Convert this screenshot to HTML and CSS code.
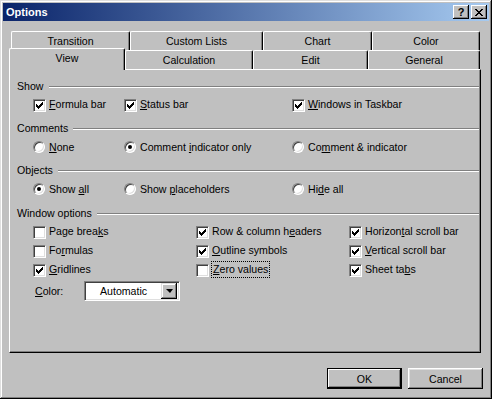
FILE: index.html
```html
<!DOCTYPE html>
<html lang="en">
<head>
    <meta charset="UTF-8">
    <title>Options</title>
    <link rel="stylesheet" href="styles.css">
</head>
<body>
    <div class="window">
        <div class="title-bar">
            <span class="title-text">Options</span>
            <div class="title-buttons">
                <button class="title-btn help-btn">?</button>
                <button class="title-btn close-btn">
                    <svg width="8" height="7" viewBox="0 0 8 7" shape-rendering="crispEdges">
                        <path d="M0 0h2v1h-2zM6 0h2v1h-2zM1 1h2v1h-2zM5 1h2v1h-2zM2 2h4v1h-4zM3 3h2v1h-2zM2 4h4v1h-4zM1 5h2v1h-2zM5 5h2v1h-2zM0 6h2v1h-2zM6 6h2v1h-2z" fill="#000"/>
                    </svg>
                </button>
            </div>
        </div>

        <!-- tab strip, two rows -->
        <div class="tab-row tab-row-top">
            <div class="tab tab-transition">Transition</div>
            <div class="tab tab-lists">Custom Lists</div>
            <div class="tab tab-chart">Chart</div>
            <div class="tab tab-color">Color</div>
        </div>
        <div class="tab-row tab-row-bottom">
            <div class="tab tab-view active">View</div>
            <div class="tab tab-calc">Calculation</div>
            <div class="tab tab-edit">Edit</div>
            <div class="tab tab-general">General</div>
        </div>

        <div class="panel">
            <div class="group-head head-show"><span>Show</span><div class="groove"></div></div>
            <div class="opt-row cols-3 row-show">
                <label class="opt"><span class="check checked"></span><span><u>F</u>ormula bar</span></label>
                <label class="opt"><span class="check checked"></span><span><u>S</u>tatus bar</span></label>
                <label class="opt"><span class="check checked"></span><span><u>W</u>indows in Taskbar</span></label>
            </div>

            <div class="group-head head-next"><span>Comments</span><div class="groove"></div></div>
            <div class="opt-row cols-3 row-radio">
                <label class="opt"><span class="radio"></span><span><u>N</u>one</span></label>
                <label class="opt"><span class="radio on"></span><span>Comment <u>i</u>ndicator only</span></label>
                <label class="opt"><span class="radio"></span><span>Co<u>m</u>ment &amp; indicator</span></label>
            </div>

            <div class="group-head head-objects"><span>Objects</span><div class="groove"></div></div>
            <div class="opt-row cols-3 row-radio">
                <label class="opt"><span class="radio on"></span><span>Show <u>a</u>ll</span></label>
                <label class="opt"><span class="radio"></span><span>Show <u>p</u>laceholders</span></label>
                <label class="opt"><span class="radio"></span><span>Hi<u>d</u>e all</span></label>
            </div>

            <div class="group-head head-next"><span>Window options</span><div class="groove"></div></div>
            <div class="window-grid">
                <label class="opt"><span class="check"></span><span>Page brea<u>k</u>s</span></label>
                <label class="opt"><span class="check checked"></span><span>Row &amp; column h<u>e</u>aders</span></label>
                <label class="opt"><span class="check checked"></span><span>Horizon<u>t</u>al scroll bar</span></label>

                <label class="opt"><span class="check"></span><span>Fo<u>r</u>mulas</span></label>
                <label class="opt"><span class="check checked"></span><span><u>O</u>utline symbols</span></label>
                <label class="opt"><span class="check checked"></span><span><u>V</u>ertical scroll bar</span></label>

                <label class="opt"><span class="check checked"></span><span><u>G</u>ridlines</span></label>
                <label class="opt"><span class="check"></span><span class="focus"><u>Z</u>ero values</span></label>
                <label class="opt"><span class="check checked"></span><span>Sheet ta<u>b</u>s</span></label>
            </div>
            <div class="color-row">
                <span class="color-label"><u>C</u>olor:</span>
                <div class="combo">
                    <span class="combo-value">Automatic</span>
                    <span class="combo-btn"><span class="arrow"></span></span>
                </div>
            </div>
        </div>

        <div class="dialog-buttons">
            <button class="btn default">OK</button>
            <button class="btn">Cancel</button>
        </div>
    </div>
</body>
</html>
```

FILE: styles.css
```css
:root {
    --face: #c0c0c0;
    --shadow: #808080;
    --dark: #000000;
    --light: #dfdfdf;
    --hilite: #ffffff;
}

body {
    margin: 0;
    background: var(--face);
    font-family: 'Liberation Sans', Arial, sans-serif;
    font-size: 10.6px;
    color: #000;
}

u {
    text-decoration: underline;
    text-underline-offset: 1px;
}

.window {
    width: 492px;
    height: 399px;
    box-sizing: border-box;
    padding: 3px;
    background: var(--face);
    box-shadow: inset -1px -1px var(--dark), inset 1px 1px var(--light),
                inset -2px -2px var(--shadow), inset 2px 2px var(--hilite);
}

/* title bar */
.title-bar {
    height: 18px;
    display: flex;
    align-items: center;
    justify-content: space-between;
    background: linear-gradient(to right, #0a246a, #a6caf0);
}

.title-text {
    color: #fff;
    font-weight: bold;
    font-size: 11px;
    padding-left: 3px;
}

.title-buttons {
    display: flex;
    gap: 2px;
    margin-right: 2px;
}

.title-btn {
    width: 16px;
    height: 14px;
    padding: 0;
    border: none;
    background: var(--face);
    box-shadow: inset -1px -1px var(--dark), inset 1px 1px var(--hilite),
                inset -2px -2px var(--shadow);
    display: flex;
    align-items: center;
    justify-content: center;
    font-family: 'Liberation Sans', Arial, sans-serif;
    font-weight: bold;
    font-size: 11px;
    line-height: 14px;
    color: #000;
}

/* tabs */
.tab-row {
    display: flex;
    height: 19px;
}

.tab-row-top {
    margin-top: 10px;
    margin-left: 8px;
}

.tab-row-bottom {
    margin-left: 6px;
    align-items: flex-end;
}

.tab {
    box-sizing: border-box;
    height: 19px;
    line-height: 18px;
    text-align: center;
    background: var(--face);
    border-top: 1px solid var(--hilite);
    border-left: 1px solid var(--hilite);
    border-right: 1px solid var(--dark);
    border-radius: 2px 2px 0 0;
    box-shadow: inset -1px 0 var(--shadow);
}

.tab-transition { width: 119px; }
.tab-lists { width: 133px; }
.tab-chart { width: 109px; }
.tab-color { width: 108px; }
.tab-view { width: 116px; }
.tab-calc { width: 128px; }
.tab-edit { width: 115px; }
.tab-general { width: 112px; }

.tab.active {
    height: 22px;
    line-height: 19px;
    margin-bottom: -1px;
    position: relative;
    z-index: 1;
}

/* page */
.panel {
    margin-left: 6px;
    width: 472px;
    height: 284px;
    box-sizing: border-box;
    border-top: 1px solid var(--hilite);
    border-left: 1px solid var(--hilite);
    border-right: 1px solid var(--dark);
    border-bottom: 1px solid var(--dark);
    box-shadow: inset -1px -1px var(--shadow);
    padding-left: 7px;
    padding-right: 1px;
}

.group-head {
    display: flex;
    align-items: center;
    height: 16px;
}

.head-show { margin-top: 8px; }
.head-next { margin-top: 8px; }
.head-objects { margin-top: 7px; }

.groove {
    flex: 1;
    height: 0;
    margin-left: 5px;
    margin-top: 2px;
    border-top: 1px solid var(--shadow);
    border-bottom: 1px solid var(--hilite);
}

.opt-row {
    display: grid;
    height: 16px;
    padding-left: 16px;
}

.cols-3 {
    grid-template-columns: 91px 168px 1fr;
}

.row-show { margin-top: 2px; }
.row-radio { margin-top: 3px; }

.opt {
    display: flex;
    align-items: center;
    gap: 3px;
    white-space: nowrap;
}

.check {
    width: 13px;
    height: 13px;
    box-sizing: border-box;
    flex-shrink: 0;
    background: #fff;
    border: 1px solid;
    border-color: var(--shadow) var(--hilite) var(--hilite) var(--shadow);
    box-shadow: inset 1px 1px #404040, inset -1px -1px var(--light);
    margin-top: 3px;
}

.check.checked {
    background: #fff url("data:image/svg+xml,%3Csvg xmlns='http://www.w3.org/2000/svg' width='7' height='7' shape-rendering='crispEdges'%3E%3Cpath d='M0 2h1v3h-1zM1 3h1v3h-1zM2 4h1v3h-1zM3 3h1v3h-1zM4 2h1v3h-1zM5 1h1v3h-1zM6 0h1v3h-1z'/%3E%3C/svg%3E") no-repeat 2px 2px;
}

.radio {
    width: 12px;
    height: 12px;
    box-sizing: border-box;
    flex-shrink: 0;
    border-radius: 50%;
    background: #fff;
    border: 1px solid;
    border-color: var(--shadow) var(--hilite) var(--hilite) var(--shadow);
    box-shadow: inset 1px 1px #404040, inset -1px -1px var(--light);
    display: flex;
    align-items: center;
    justify-content: center;
    margin-right: 1px;
}

.radio.on::after {
    content: '';
    width: 4px;
    height: 4px;
    border-radius: 50%;
    background: #000;
}

.window-grid {
    display: grid;
    grid-template-columns: 163px 153px 1fr;
    grid-auto-rows: 16px;
    row-gap: 3px;
    margin-top: 2px;
    padding-left: 16px;
}

.focus {
    outline: 1px dotted #000;
    outline-offset: 0;
    padding: 1px 1px 2px;
}

.color-row {
    display: flex;
    align-items: center;
    margin-top: 4px;
    padding-left: 18px;
    height: 20px;
}

.color-label {
    width: 49px;
}

.combo {
    width: 96px;
    height: 20px;
    box-sizing: border-box;
    display: flex;
    align-items: center;
    background: #fff;
    border: 1px solid;
    border-color: var(--shadow) var(--hilite) var(--hilite) var(--shadow);
    box-shadow: inset 1px 1px #404040, inset -1px -1px var(--light);
    padding: 2px;
}

.combo-value {
    flex: 1;
    padding-left: 13px;
}

.combo-btn {
    width: 16px;
    height: 16px;
    box-sizing: border-box;
    background: var(--face);
    box-shadow: inset -1px -1px var(--dark), inset 1px 1px var(--light),
                inset -2px -2px var(--shadow), inset 2px 2px var(--hilite);
    display: flex;
    align-items: center;
    justify-content: center;
}

.arrow {
    width: 0;
    height: 0;
    border-left: 4px solid transparent;
    border-right: 3px solid transparent;
    border-top: 4px solid #000;
}

/* OK / Cancel */
.dialog-buttons {
    display: flex;
    justify-content: flex-end;
    gap: 6px;
    margin-top: 15px;
    margin-right: 6px;
}

.btn {
    width: 75px;
    height: 21px;
    padding: 0;
    border: none;
    background: var(--face);
    font-family: 'Liberation Sans', Arial, sans-serif;
    font-size: 10.6px;
    color: #000;
    box-shadow: inset -1px -1px var(--dark), inset 1px 1px var(--hilite),
                inset -2px -2px var(--shadow), inset 2px 2px var(--light);
}

.btn.default {
    box-shadow: inset 0 0 0 1px var(--dark),
                inset -2px -2px var(--dark), inset 2px 2px var(--hilite),
                inset -3px -3px var(--shadow);
}
```
